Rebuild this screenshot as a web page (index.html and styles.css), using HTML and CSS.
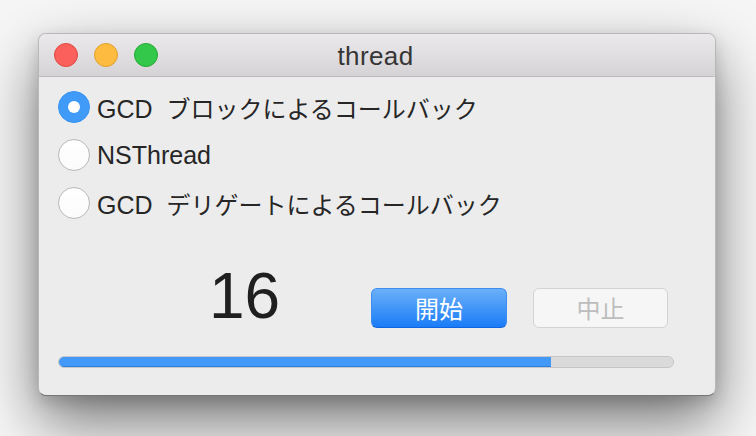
FILE: index.html
```html
<!DOCTYPE html>
<html lang="ja">
<head>
<meta charset="utf-8">
<title>thread</title>
<link rel="stylesheet" href="styles.css">
</head>
<body>
<div class="window">
  <div class="titlebar">
    <div class="lights">
      <span class="light red"></span>
      <span class="light yellow"></span>
      <span class="light green"></span>
    </div>
    <div class="title">thread</div>
    <div class="spacer"></div>
  </div>
  <div class="content">
    <div class="options">
      <label class="option"><span class="radio checked"></span><span class="label">GCD  <span class="ja">ブロックによるコールバック</span></span></label>
      <label class="option"><span class="radio"></span><span class="label">NSThread</span></label>
      <label class="option"><span class="radio"></span><span class="label">GCD  <span class="ja">デリゲートによるコールバック</span></span></label>
    </div>
    <div class="controls">
      <div class="count">16</div>
      <button class="btn primary">開始</button>
      <button class="btn disabled">中止</button>
    </div>
    <div class="progress"><div class="fill" style="width: 80.2%"></div></div>
  </div>
</div>
</body>
</html>
```

FILE: styles.css
```css
html, body {
  margin: 0;
  padding: 0;
}
body {
  background: #f6f6f6;
  width: 756px;
  height: 436px;
  overflow: hidden;
  padding: 33px 0 0 38px;
  box-sizing: border-box;
  font-family: "Liberation Sans", "Noto Sans CJK JP", sans-serif;
  color: #262626;
}
.window {
  width: 678px;
  height: 363px;
  box-sizing: border-box;
  border: 1px solid rgba(0,0,0,0.22);
  border-bottom-color: rgba(0,0,0,0.5);
  border-radius: 8px;
  background: #ececec;
  box-shadow: 0 26px 60px rgba(0,0,0,0.52), 0 6px 16px rgba(0,0,0,0.14);
  overflow: hidden;
}
.titlebar {
  height: 43px;
  box-sizing: border-box;
  display: grid;
  grid-template-columns: 1fr auto 1fr;
  align-items: center;
  background: linear-gradient(#ebe9eb, #d5d3d5);
  border-bottom: 1px solid #bdbcbd;
}
.lights {
  display: flex;
  gap: 16px;
  padding-left: 15px;
  margin-top: -1px;
}
.light {
  width: 24px;
  height: 24px;
  border-radius: 50%;
  box-sizing: border-box;
}
.red { background: #fc605c; border: 1px solid #e0483f; }
.yellow { background: #fdbc40; border: 1px solid #e0a02f; }
.green { background: #34c84a; border: 1px solid #25a934; }
.title {
  font-size: 26px;
  color: #363636;
  padding-top: 2px;
  padding-right: 3px;
  letter-spacing: 0.4px;
}
.content {
  padding: 6px 19px 0 19px;
}
.option {
  height: 48px;
  display: flex;
  align-items: center;
}
.radio {
  width: 32px;
  height: 32px;
  box-sizing: border-box;
  border-radius: 50%;
  background: linear-gradient(#ffffff, #fbfbfb);
  border: 1px solid #b9b9b9;
  margin-right: 7px;
  display: flex;
  align-items: center;
  justify-content: center;
  flex: none;
}
.radio.checked {
  background: #3f9af8;
  border-color: #3a94f2;
}
.radio.checked::after {
  content: "";
  width: 12px;
  height: 12px;
  border-radius: 50%;
  background: #fff;
}
.label {
  font-size: 25px;
  white-space: pre;
}
.ja {
  font-family: "Noto Sans CJK JP", sans-serif;
  font-size: 24px;
}
.controls {
  display: flex;
  align-items: flex-end;
  margin-top: 36px;
}
.count {
  font-size: 64px;
  line-height: 66px;
  height: 66px;
  margin-left: 151px;
  width: 74px;
  color: #1f1f1f;
}
.btn {
  width: 136px;
  height: 40px;
  box-sizing: border-box;
  border-radius: 6px;
  font-family: "Noto Sans CJK JP", sans-serif;
  font-size: 24px;
  line-height: 36px;
  padding: 0;
  margin-bottom: 1px;
}
.btn.primary {
  margin-left: 88px;
  color: #fff;
  background: linear-gradient(#6bb0f9, #1a7cf7);
  border: 1px solid #3d8ef0;
  border-bottom-color: #1264de;
}
.btn.disabled {
  margin-left: 26px;
  width: 135px;
  color: #bdbdbd;
  background: #f6f6f6;
  border: 1px solid #d3d3d3;
}
.progress {
  margin-top: 27px;
  width: 616px;
  height: 12px;
  box-sizing: border-box;
  border-radius: 6px;
  background: #dadada;
  border: 1px solid #c6c6c6;
  overflow: hidden;
  display: flex;
}
.fill {
  height: 100%;
  background: #4399f7;
  border-bottom: 1px solid #2f7fe0;
  box-sizing: content-box;
  margin: -1px 0 -1px -1px;
  padding-left: 1px;
}
```
